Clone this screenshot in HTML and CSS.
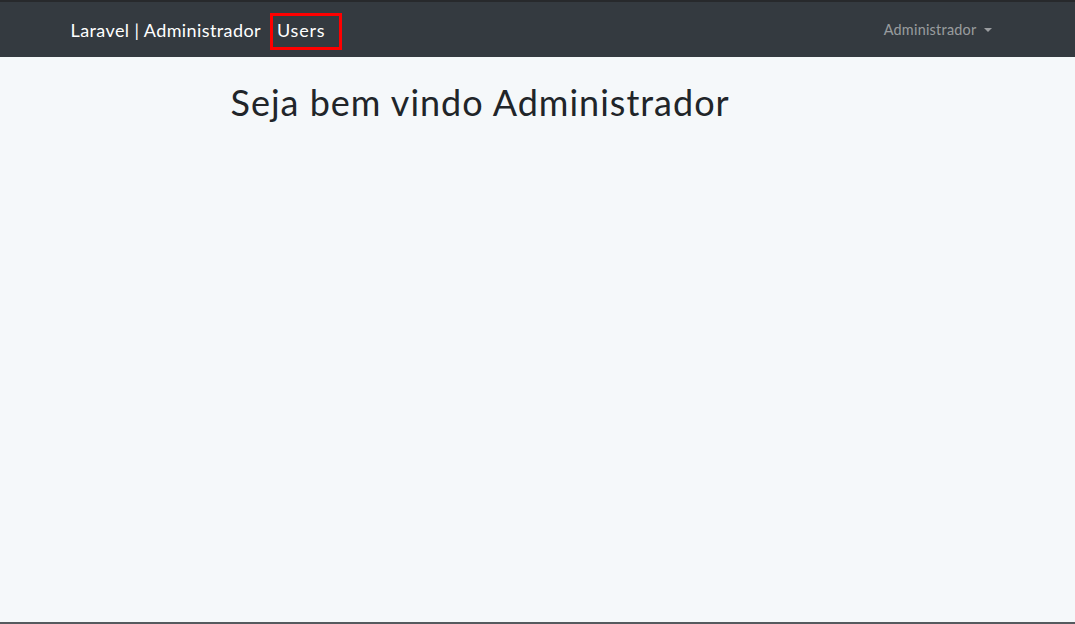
FILE: index.html
```html
<!DOCTYPE html>
<html lang="pt">
<head>
<meta charset="utf-8">
<title>Laravel | Administrador</title>
<link rel="stylesheet" href="styles.css">
</head>
<body>
<div class="app">
  <nav class="navbar">
    <div class="container nav-inner">
      <div class="nav-left">
        <a class="brand" href="#">Laravel | Administrador</a>
        <a class="nav-link highlight" href="#">Users</a>
      </div>
      <div class="nav-right">
        <a class="dropdown" href="#">Administrador <span class="caret"></span></a>
      </div>
    </div>
  </nav>
  <main class="main">
    <div class="container">
      <div class="col">
        <h1 class="title">Seja bem vindo Administrador</h1>
      </div>
    </div>
  </main>
</div>
</body>
</html>
```

FILE: styles.css
```css
* { box-sizing: border-box; }
html, body { margin: 0; padding: 0; height: 100%; }
body {
  font-family: "Lato", "Liberation Sans", sans-serif;
  background: #f5f8fa;
  color: #212529;
}
.app {
  display: flex;
  flex-direction: column;
  border-top: 2px solid #27292c;
  border-bottom: 2px solid #555a5e;
  height: 624px;
}
.navbar {
  background: #343a40;
  height: 55px;
  display: flex;
  align-items: center;
}
.container {
  width: 960px;
  margin: 0 auto;
  padding: 0 15px 0 13px;
}
.nav-inner {
  display: flex;
  justify-content: space-between;
  align-items: center;
}
.nav-left { display: flex; align-items: center; }
.brand {
  color: #fff;
  text-decoration: none;
  font-size: 18px;
  letter-spacing: 0.4px;
  margin-right: 9px;
  margin-top: 1px;
}
.nav-link {
  color: #fff;
  text-decoration: none;
  font-size: 18px;
  letter-spacing: 0.8px;
  height: 37px;
  display: flex;
  align-items: center;
  padding: 0 14px 3px 4px;
  margin-top: 4px;
}
.highlight {
  border: 3px solid #ff0000;
}
.nav-right { display: flex; align-items: center; }
.dropdown {
  color: rgba(255,255,255,0.5);
  text-decoration: none;
  font-size: 14.4px;
  letter-spacing: 0.25px;
  padding: 8px 9px 8px 8px;
  margin-right: 2px;
  display: flex;
  align-items: center;
}
.caret {
  display: inline-block;
  margin-left: 7px;
  width: 0; height: 0;
  border-left: 4px solid transparent;
  border-right: 4px solid transparent;
  border-top: 4px solid rgba(255,255,255,0.5);
}
.main { flex: 1; padding-top: 24px; }
.col { margin-left: 160px; width: 640px; }
.title {
  margin: 0;
  font-size: 36px;
  font-weight: 400;
  letter-spacing: 1px;
  line-height: 1.2;
  color: #212529;
}
```
